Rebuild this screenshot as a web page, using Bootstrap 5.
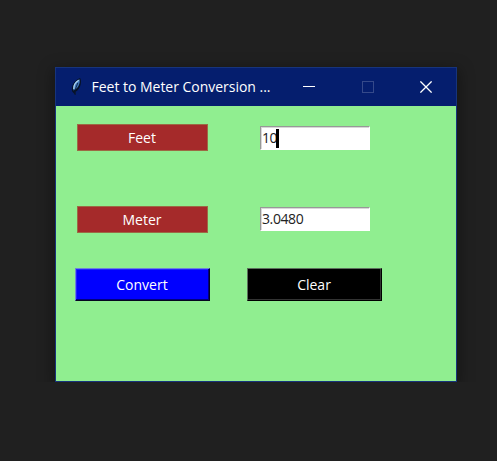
<!DOCTYPE html>
<html lang="en">
<head>
<meta charset="utf-8">
<meta name="viewport" content="width=device-width, initial-scale=1">
<title>Feet to Meter Conversion</title>
<link href="https://cdn.jsdelivr.net/npm/bootstrap@5.3.0/dist/css/bootstrap.min.css" rel="stylesheet">
<style>
body { background: #202020; font-family: "Open Sans", "Noto Sans", sans-serif; }
.app-window { width: 402px; height: 315px; margin: 67px 0 0 55px; border: 1px solid #17347c; background: #90ee90; box-shadow: 0 4px 14px 2px rgba(0,0,0,.36); }
.title-bar { height: 38px; background: #051e6e; padding-left: 12px; color: #fff; }
.title-text { font-size: 14px; line-height: 20px; letter-spacing: -.02px; margin-left: 7.5px; width: 188.25px; white-space: nowrap; }
.win-btn { width: 58.5px; height: 38px; background: none; border: 0; padding: 0; color: #fff; }
.win-btn:disabled { color: #35498a; }
.form-area { padding: 18px 0 0 19px; font-size: 14px; }
.field-row { height: 27px; margin-left: 2px; gap: 52px; }
.row-meter { margin-top: 54px; margin-bottom: 36px; }
.tag { width: 131px; height: 27px; background: #a52a2a; color: #fff; border: 1px solid #9c6a44; line-height: 25px; padding-right: 1px; }
.row-meter .tag { margin-top: 1px; }
.entry-box { width: 110px; height: 24px; }
.entry-box input { border: 1px solid #fff; border-top-color: #989898; border-left-color: #989898; box-shadow: inset 1px 1px #d8d8d8; border-radius: 0; padding: 0 0 0 1px; font-size: 14px; letter-spacing: -.4px; line-height: 20px; height: 24px; min-height: 0; color: #222; background: #fff; }
.caret { left: 16px; top: 3px; width: 3px; height: 19px; background: #000; }
.tk-btn { width: 135px; height: 33px; border-radius: 0; color: #fff; font-size: 14px; line-height: 28px; padding: 0 1px 0 0; border: 1px solid; }
.tk-convert { background: #00f; border-color: #6d84d8 #060620 #060620 #6d84d8; box-shadow: inset -1px -1px #000080, inset 1px 1px #2020ff; }
.tk-clear { background: #000; border-color: #5c705c #000 #000 #5c705c; box-shadow: inset -1px -1px #333; }
.button-row { gap: 37px; }
</style>
<script src="https://cdn.jsdelivr.net/npm/bootstrap@5.3.0/dist/js/bootstrap.bundle.min.js"></script>
</head>
<body class="overflow-hidden">
<main class="app-window">
  <header class="title-bar d-flex align-items-center">
    <svg class="flex-shrink-0" width="16" height="20" viewBox="0 0 16 20" aria-hidden="true">
      <path d="M7.500 18 4.200 14.500C2.800 9 6.500 3 12 1c1.800 2.500 1 7.500-1 10.500-1 1.700-2.200 2.500-3.500 3.300z" fill="#071226"/>
      <path d="M5.500 13.500C4 8.500 7.500 4 11.500 2.200c1 3.500-1 9-6 11.300z" fill="#3f78bd"/>
      <path d="M5.800 12C5.600 8.500 7.800 5 10.800 3.200" stroke="#a9d0ee" stroke-width="1.300" fill="none"/>
      <path d="M7 18V13L9.800 6" stroke="#0a1830" stroke-width=".8" fill="none"/>
    </svg>
    <span class="title-text flex-shrink-0">Feet to Meter Conversion ...</span>
    <div class="d-flex flex-shrink-0">
      <button class="win-btn" aria-label="Minimize"><svg class="d-block mx-auto" width="12" height="12" viewBox="0 0 12 12" shape-rendering="crispEdges"><path d="M0 5.500H12" stroke="currentColor"/></svg></button>
      <button class="win-btn" aria-label="Maximize" disabled><svg class="d-block mx-auto" width="12" height="12" viewBox="0 0 12 12" shape-rendering="crispEdges"><path d="M.5.5h11v11H.5z" fill="none" stroke="currentColor"/></svg></button>
      <button class="win-btn" aria-label="Close"><svg class="d-block mx-auto" width="12" height="12" viewBox="0 0 12 12"><path d="M.4.4l11.200 11.200M11.600.4L.4 11.600" stroke="currentColor" stroke-width="1.300"/></svg></button>
    </div>
  </header>
  <div class="form-area">
    <div class="field-row d-flex align-items-center">
      <label class="tag text-center" for="feet">Feet</label>
      <div class="entry-box position-relative"><input id="feet" class="form-control" type="text" value="10"><span class="caret position-absolute"></span></div>
    </div>
    <div class="field-row row-meter d-flex align-items-center">
      <label class="tag text-center" for="meter">Meter</label>
      <div class="entry-box"><input id="meter" class="form-control" type="text" value="3.0480"></div>
    </div>
    <div class="button-row d-flex">
      <button class="btn tk-btn tk-convert" type="button">Convert</button>
      <button class="btn tk-btn tk-clear" type="button">Clear</button>
    </div>
  </div>
</main>
</body>
</html>
